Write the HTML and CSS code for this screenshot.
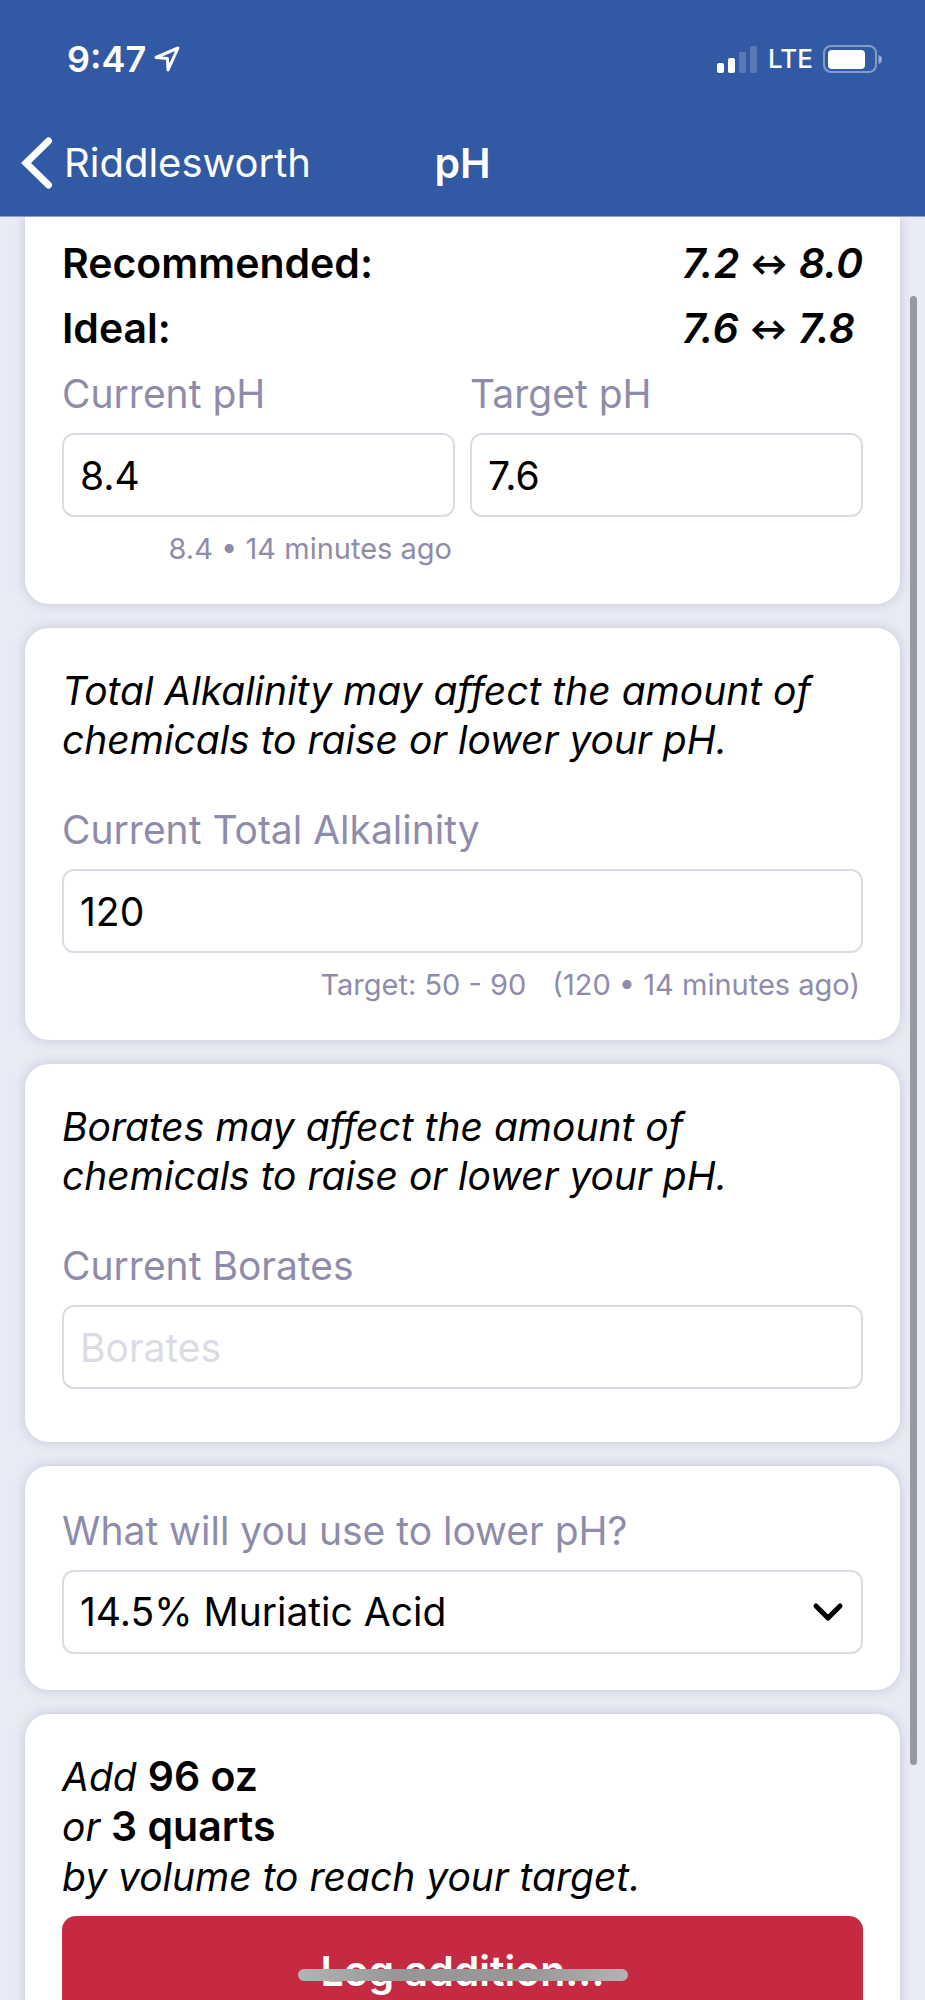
FILE: index.html
```
<!DOCTYPE html>
<html lang="en">

<head>
    <meta charset="utf-8">
    <meta name="viewport" content="width=device-width, initial-scale=1.0">
    <title>pH</title>
    <link rel="stylesheet" href="styles.css">
</head>

<body>

    <header>
        <div class="status">
            <div class="status-left">
                <span class="time">9:47</span>
                <svg width="26" height="26" viewBox="0 0 26 26" fill="none" stroke="#fff" stroke-width="3" stroke-linejoin="round"><path d="M24 2L2 11.500L13.500 12.500L14 24Z" /></svg>
            </div>
            <div class="status-right">
                <svg width="41" height="28" viewBox="0 0 41 28" fill="#fff">
                    <rect x="0" y="18" width="7" height="10" rx="2" />
                    <rect x="11" y="13" width="7" height="15" rx="2" />
                    <rect x="22" y="7" width="7" height="21" rx="2" opacity=".2" />
                    <rect x="33" y="1" width="7" height="27" rx="2" opacity=".2" />
                </svg>
                <span class="network">LTE</span>
                <svg width="60" height="28" viewBox="0 0 60 28">
                    <rect x="1" y="1" width="52" height="26" rx="7" fill="none" stroke="#fff" stroke-width="2" opacity=".4" />
                    <rect x="5" y="5" width="37" height="19" rx="4" fill="#fff" />
                    <path d="M55.500 10Q59 11 59 14Q59 18 55.500 19Z" fill="#fff" opacity=".5" />
                </svg>
            </div>
        </div>
        <nav>
            <a class="back" href="#">
                <svg width="32" height="52" viewBox="0 0 32 52" fill="none" stroke="#fff" stroke-width="7" stroke-linecap="round" stroke-linejoin="miter"><path d="M27.500 4L5 26L27.500 48" /></svg>
                <span>Riddlesworth</span>
            </a>
            <h1>pH</h1>
        </nav>
    </header>

    <main>
        <section class="card card-top">
            <dl class="ranges">
                <dt>Recommended:</dt>
                <dd>7.2 <span class="arrow">↔</span> 8.0</dd>
                <dt>Ideal:</dt>
                <dd>7.6 <span class="arrow">↔</span> 7.8</dd>
            </dl>
            <div class="columns">
                <div class="field">
                    <label for="current-ph">Current pH</label>
                    <input id="current-ph" type="text" inputmode="decimal" value="8.4">
                    <p class="hint">8.4 • 14 minutes ago</p>
                </div>
                <div class="field">
                    <label for="target-ph">Target pH</label>
                    <input id="target-ph" type="text" inputmode="decimal" value="7.6">
                </div>
            </div>
        </section>

        <section class="card">
            <p class="note">Total Alkalinity may affect the amount of chemicals to raise or lower your pH.</p>
            <div class="field">
                <label for="alkalinity">Current Total Alkalinity</label>
                <input id="alkalinity" type="text" inputmode="decimal" value="120">
                <p class="hint"><span>Target: 50 - 90</span><span>(120 • 14 minutes ago)</span></p>
            </div>
        </section>

        <section class="card">
            <p class="note">Borates may affect the amount of<br>chemicals to raise or lower your pH.</p>
            <div class="field no-hint">
                <label for="borates">Current Borates</label>
                <input id="borates" type="text" inputmode="decimal" placeholder="Borates">
            </div>
        </section>

        <section class="card card-select">
            <div class="field">
                <label for="acid">What will you use to lower pH?</label>
                <div class="select">
                    <select id="acid">
                        <option>14.5% Muriatic Acid</option>
                    </select>
                    <svg width="32" height="20" viewBox="0 0 32 20" fill="none" stroke="#000" stroke-width="5" stroke-linecap="round" stroke-linejoin="round"><path d="M4 4L16 16L28 4" /></svg>
                </div>
            </div>
        </section>

        <section class="card">
            <p class="result">Add <strong>96 oz</strong><br>or <strong>3 quarts</strong><br>by volume to reach your target.</p>
            <button class="log">Log addition...</button>
        </section>
    </main>

    <div class="scrollbar"></div>
    <div class="home"></div>

</body>

</html>
```
FILE: styles.css
```
* {
    box-sizing: border-box;
}

body {
    margin: 0;
    height: 100vh;
    display: flex;
    flex-direction: column;
    position: relative;
    overflow: hidden;
    background-color: #e8eaf4;
    color: #000;
    font-family: Inter, "Liberation Sans", sans-serif;
    font-size: 39px;
    line-height: 50px;
}

h1, p, dl, dd {
    margin: 0;
}

svg {
    display: block;
    flex: none;
}

/* top bar */
header {
    flex: none;
    padding-bottom: 9px;
    background-color: #3259a3;
    border-bottom: 1px solid #8c9fca;
    color: #fff;
}

.status {
    display: flex;
    justify-content: space-between;
    align-items: center;
    height: 118px;
    padding: 0 42px 0 67px;
}

.status-left, .status-right {
    display: flex;
    align-items: center;
    gap: 8px;
}

.status-right {
    gap: 10px;
}

.time {
    font-size: 36px;
    font-weight: 600;
}

.network {
    font-size: 26px;
    font-weight: 500;
}

nav {
    display: grid;
    grid-template-columns: 1fr auto 1fr;
    align-items: center;
    height: 89px;
    padding: 0 21px;
}

.back {
    display: flex;
    align-items: center;
    gap: 11px;
    color: #fff;
    font-size: 40px;
    text-decoration: none;
}

h1 {
    font-size: 41px;
    font-weight: 600;
}

/* cards */
main {
    flex: 1;
    min-height: 0;
    overflow: hidden;
    padding: 0 25px;
}

.card {
    margin-bottom: 24px;
    padding: 38px 37px 36px;
    border-radius: 24px;
    background-color: #fff;
    box-shadow: 0 0 12px rgba(60, 60, 90, .2);
}

.card-top {
    padding-top: 14px;
    border-radius: 0 0 24px 24px;
}

.card-select {
    padding-top: 32px;
}

.ranges {
    display: grid;
    grid-template-columns: 1fr auto;
    font-size: 41px;
    font-weight: 600;
    line-height: 65px;
}

.ranges dd {
    font-style: italic;
}

.arrow {
    font-size: 29px;
    font-style: normal;
    font-weight: 800;
    line-height: 29px;
    vertical-align: 4px;
}

.columns {
    display: grid;
    grid-template-columns: 1fr 1fr;
    gap: 15px;
}

label {
    display: block;
    margin-bottom: 7px;
    line-height: 65px;
    color: #8f8cab;
}

input, select {
    display: block;
    width: 100%;
    height: 84px;
    padding: 0 16px;
    border: 2px solid #dcdbe5;
    border-radius: 12px;
    background-color: #fff;
    color: #000;
    font: inherit;
}

input::placeholder {
    color: #dcdbe5;
}

select {
    appearance: none;
}

.select {
    position: relative;
}

.select svg {
    position: absolute;
    top: 32px;
    right: 19px;
    pointer-events: none;
}

.hint {
    display: flex;
    justify-content: flex-end;
    gap: 26px;
    margin-top: 13px;
    padding-right: 3px;
    font-size: 29px;
    line-height: 38px;
    color: #8f8cab;
}

.no-hint {
    padding-bottom: 17px;
}

.note {
    margin-bottom: 33px;
    font-style: italic;
    line-height: 49px;
}

.result {
    margin-bottom: 14px;
    font-style: italic;
}

.result strong {
    font-size: 41px;
    font-style: normal;
    font-weight: 600;
    line-height: 49px;
}

.log {
    display: block;
    width: 100%;
    padding: 30px;
    border: none;
    border-radius: 14px;
    background-color: #c62942;
    color: #fff;
    font: inherit;
    font-size: 41px;
    font-weight: 600;
}

/* overlays */
.scrollbar {
    position: absolute;
    top: 296px;
    right: 8px;
    bottom: 235px;
    width: 7px;
    border-radius: 4px;
    background-color: #96999f;
}

.home {
    position: absolute;
    bottom: 19px;
    left: 50%;
    width: 330px;
    height: 12px;
    margin-left: -165px;
    border-radius: 6px;
    background: linear-gradient(to right, #b4b4b4, #979797 30%, #979797 70%, #b4b4b4);
}
```
